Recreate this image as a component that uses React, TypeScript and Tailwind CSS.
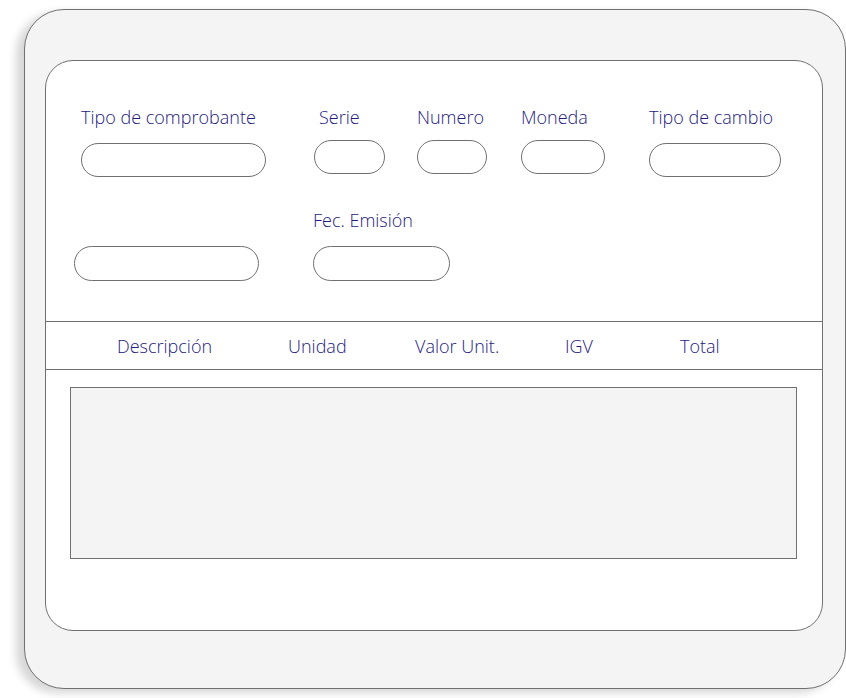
const labelCls = "text-[18px] leading-[24px] text-[#24197f] font-['Open_Sans',sans-serif] font-light whitespace-nowrap";
const inputCls = "h-[34px] rounded-full border border-[#707070] bg-white";

type FieldProps = {
  label: string;
  width: string;
  ml: string;
  labelMl?: string;
  inputMt?: string;
};

const Field = ({ label, width, ml, labelMl = "", inputMt = "" }: FieldProps) => (
  <div className={`flex flex-col ${ml}`}>
    <span className={`${labelCls} ${labelMl}`}>{label}</span>
    <div className={`${inputCls} ${width} mt-[11px] ${inputMt}`} />
  </div>
);

const columns = [
  { name: "Descripción", w: "w-[171px]" },
  { name: "Unidad", w: "w-[127px]" },
  { name: "Valor Unit.", w: "w-[150px]" },
  { name: "IGV", w: "w-[115px]" },
  { name: "Total", w: "w-[80px]" },
];

export default function App() {
  return (
    <div className="w-[846px] h-[698px] bg-white pt-[9px] pl-[24px]">
      <div className="w-[822px] h-[680px] rounded-[40px] border border-[#707070] bg-[#f4f4f4] shadow-[-8px_4px_8px_rgba(0,0,0,0.16)] pt-[50px] pl-[20px]">
        <div className="w-[778px] h-[571px] rounded-[28px] border border-[#707070] bg-white flex flex-col">
          {/* cabecera del comprobante */}
          <div className="h-[260px] flex flex-col pt-[44px]">
            <div className="flex">
              <Field label="Tipo de comprobante" width="w-[185px]" ml="ml-[35px]" inputMt="mt-[14px]" />
              <Field label="Serie" width="w-[71px]" ml="ml-[48px]" labelMl="ml-[5px]" />
              <Field label="Numero" width="w-[70px]" ml="ml-[32px]" />
              <Field label="Moneda" width="w-[84px]" ml="ml-[34px]" />
              <Field label="Tipo de cambio" width="w-[132px]" ml="ml-[44px]" inputMt="mt-[14px]" />
            </div>
            <div className="flex mt-[31px] items-end">
              <div className={`${inputCls} w-[185px] h-[35px] ml-[28px]`} />
              <div className="flex flex-col ml-[54px]">
                <span className={labelCls}>Fec. Emisión</span>
                <div className={`${inputCls} w-[137px] h-[35px] mt-[14px]`} />
              </div>
            </div>
          </div>

          {/* columnas del detalle */}
          <div className="h-[49px] border-y border-[#707070] flex items-center pl-[71px]">
            {columns.map((c) => (
              <span key={c.name} className={`${labelCls} ${c.w}`}>
                {c.name}
              </span>
            ))}
          </div>

          <div className="pt-[17px] pl-[24px]">
            <div className="w-[727px] h-[172px] border border-[#707070] bg-[#f4f4f4]" />
          </div>
        </div>
      </div>
    </div>
  );
}
